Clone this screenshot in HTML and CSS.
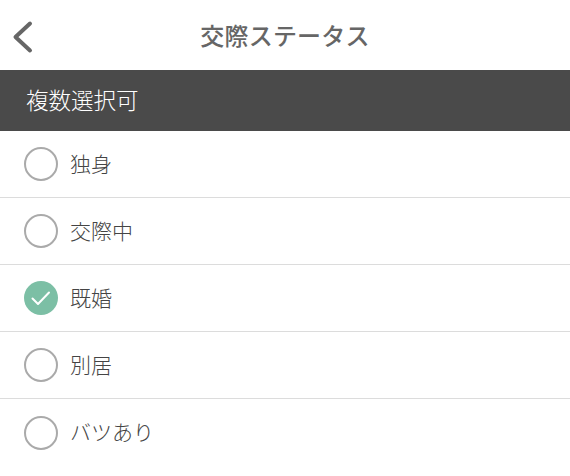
FILE: index.html
```html
<!DOCTYPE html>
<html lang="ja">
<head>
<meta charset="utf-8">
<title>交際ステータス</title>
<link rel="stylesheet" href="styles.css">
</head>
<body>
<header class="nav">
  <svg class="back" width="24" height="36" viewBox="0 0 24 36"><path d="M19 4.500 4.500 18 19 31.500"/></svg>
  <h1 class="title">交際ステータス</h1>
</header>
<div class="band">複数選択可</div>
<ul class="list">
  <li class="row"><span class="radio"></span><span class="label">独身</span></li>
  <li class="row"><span class="radio"></span><span class="label">交際中</span></li>
  <li class="row"><span class="radio checked"><svg width="34" height="34" viewBox="0 0 34 34"><path d="M8.500 17.500 14 23 25 11.500"/></svg></span><span class="label">既婚</span></li>
  <li class="row"><span class="radio"></span><span class="label">別居</span></li>
  <li class="row"><span class="radio"></span><span class="label">バツあり</span></li>
</ul>
</body>
</html>
```
FILE: styles.css
```css
* { box-sizing: border-box; }
html, body { margin: 0; padding: 0; background: #fff; }
body {
  width: 570px;
  height: 476px;
  overflow: hidden;
  font-family: "Noto Sans CJK JP", "Noto Sans", sans-serif;
}
.nav {
  height: 70px;
  display: flex;
  align-items: center;
  justify-content: center;
  position: relative;
  padding-bottom: 1px;
}
.back { position: absolute; left: 11px; top: 19px; }
.back path { fill: none; stroke: #666; stroke-width: 4; stroke-linecap: round; stroke-linejoin: round; }
.title {
  margin: 0;
  font-size: 24px;
  font-weight: 500;
  color: #666;
  letter-spacing: 0.200px;
}
.band {
  height: 61px;
  background: #4a4a4a;
  color: #fff;
  display: flex;
  align-items: center;
  padding-left: 26px;
  padding-bottom: 3px;
  font-size: 22.500px;
  font-weight: 300;
}
.list { list-style: none; margin: 0; padding: 0; }
.row {
  height: 67px;
  display: flex;
  align-items: center;
  gap: 12px;
  padding-left: 24px;
  border-bottom: 1px solid #dcdcdc;
}
.row:last-child { border-bottom: 0; }
.radio {
  width: 34px;
  height: 34px;
  border-radius: 50%;
  border: 2px solid #aaa;
  flex: none;
}
.radio.checked { border: 0; background: #7cbfa5; }
.radio svg { display: block; }
.radio path { fill: none; stroke: #fff; stroke-width: 2; stroke-linecap: round; stroke-linejoin: round; }
.label { font-size: 21px; font-weight: 300; color: #444; padding-bottom: 3px; }
```
